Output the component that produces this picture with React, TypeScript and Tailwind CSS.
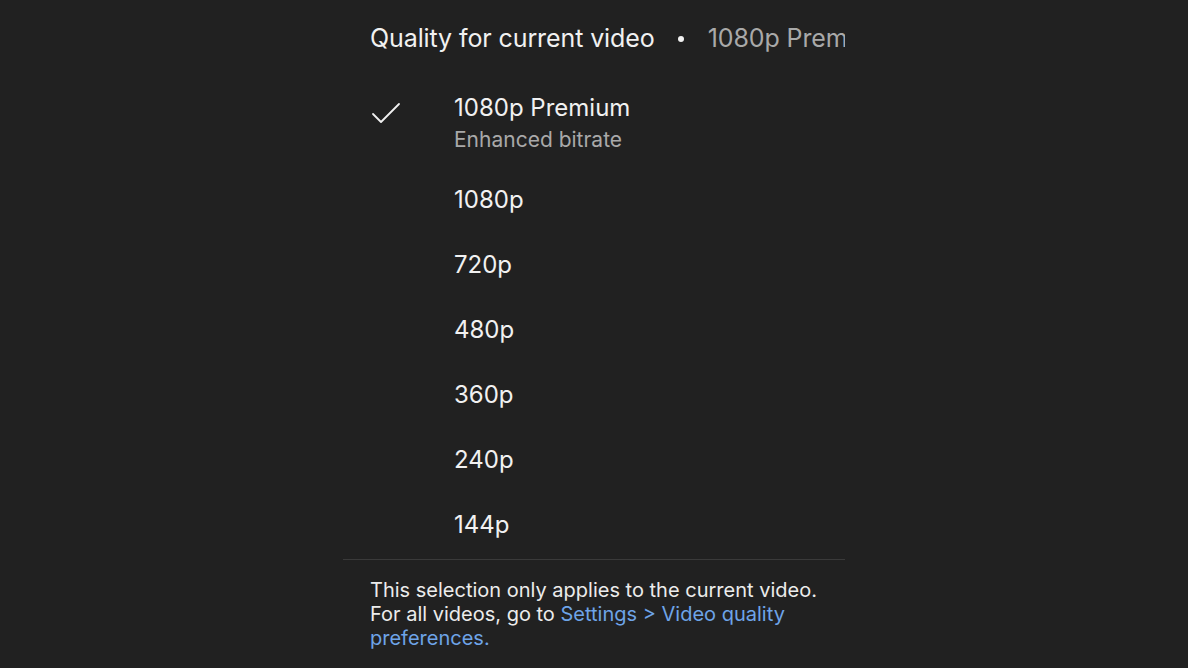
import React from 'react';

const qualities = ['1080p', '720p', '480p', '360p', '240p', '144p'];

export default function App() {
  return (
    <div
      className="w-full h-[668px] bg-[#212121] text-[#f1f1f1] overflow-hidden"
      style={{ fontFamily: 'Inter, "Noto Sans", sans-serif' }}
    >
      <div className="w-[502px] mx-auto">
        {/* Header */}
        <div className="h-[78px] flex items-center pl-[27px] whitespace-nowrap overflow-hidden text-[25px] tracking-[-0.1px]">
          <span className="text-[#f1f1f1]">Quality for current video</span>
          <span className="ml-[23px] mr-[24px] w-[6px] h-[6px] rounded-full bg-[#f1f1f1] shrink-0"></span>
          <span className="text-[#a9a9a9]">1080p Premium</span>
        </div>

        {/* Selected option */}
        <div className="h-[89px] pt-[14px] flex">
          <div className="w-[111px] shrink-0 pl-[27px] pt-[10px]">
            <svg width="32" height="26" viewBox="0 0 32 26" fill="none">
              <path d="M3 12 L11 20 L29 2" stroke="#f1f1f1" strokeWidth="1.8" strokeLinecap="round" strokeLinejoin="round" />
            </svg>
          </div>
          <div className="flex flex-col">
            <span className="text-[24px] leading-[32px]">1080p Premium</span>
            <span className="text-[21px] leading-[32px] text-[#a9a9a9]">Enhanced bitrate</span>
          </div>
        </div>

        {/* Other options */}
        {qualities.map((q) => (
          <div key={q} className="h-[65px] flex items-center pl-[111px] text-[24px]">
            {q}
          </div>
        ))}

        {/* Footer */}
        <div className="mt-[2px] border-t border-[#3a3a3a] pt-[18px] pl-[27px] pr-[20px] text-[20px] leading-[24px] text-[#ececec]">
          <p>This selection only applies to the current video.</p>
          <p>
            For all videos, go to{' '}
            <span className="text-[#6ea4e8]">Settings &gt; Video quality preferences.</span>
          </p>
        </div>
      </div>
    </div>
  );
}
